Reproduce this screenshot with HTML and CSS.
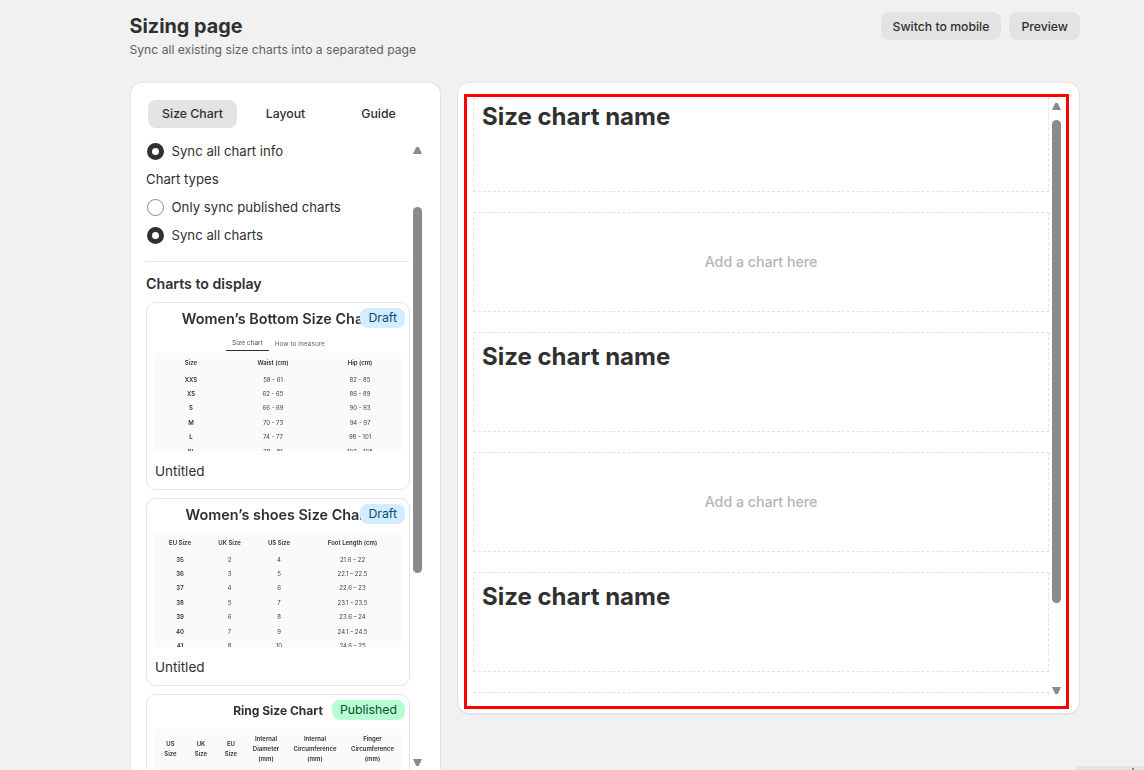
FILE: index.html
```html
<!DOCTYPE html>
<html lang="en">
<head>
<meta charset="utf-8">
<title>Sizing page</title>
<link rel="stylesheet" href="styles.css">
</head>
<body>
<main class="page">
  <header class="head">
    <div>
      <h1 class="title">Sizing page</h1>
      <p class="subtitle">Sync all existing size charts into a separated page</p>
    </div>
    <div class="actions">
      <button class="btn">Switch to mobile</button>
      <button class="btn">Preview</button>
    </div>
  </header>
  <div class="columns">
    <aside class="card side">
      <nav class="tabs">
        <span class="tab active">Size Chart</span>
        <span class="tab">Layout</span>
        <span class="tab">Guide</span>
      </nav>
      <div class="options">
        <label class="radio"><i class="dot on"></i>Sync all chart info</label>
        <div class="plain">Chart types</div>
        <label class="radio"><i class="dot"></i>Only sync published charts</label>
        <label class="radio"><i class="dot on"></i>Sync all charts</label>
      </div>
      <hr class="rule">
      <h2 class="section">Charts to display</h2>
      <div class="charts">
        <article class="chart">
          <span class="badge draft">Draft</span>
          <div class="chart-title">Women’s Bottom Size Chart</div>
          <div class="mini-tabs"><span class="mini-tab on">Size chart</span><span class="mini-tab">How to measure</span></div>
          <div class="sheet sheet-a">
            <b>Size</b><b>Waist (cm)</b><b>Hip (cm)</b>
            <b>XXS</b><span>58 - 61</span><span>82 - 85</span>
            <b>XS</b><span>62 - 65</span><span>86 - 89</span>
            <b>S</b><span>66 - 69</span><span>90 - 93</span>
            <b>M</b><span>70 - 73</span><span>94 - 97</span>
            <b>L</b><span>74 - 77</span><span>98 - 101</span>
            <b>XL</b><span>78 - 81</span><span>102 - 105</span>
          </div>
          <div class="chart-name">Untitled</div>
        </article>
        <article class="chart">
          <span class="badge draft">Draft</span>
          <div class="chart-title">Women’s shoes Size Chart</div>
          <div class="sheet sheet-b">
            <b>EU Size</b><b>UK Size</b><b>US Size</b><b>Foot Length (cm)</b>
            <b>35</b><span>2</span><span>4</span><span>21.6 – 22</span>
            <b>36</b><span>3</span><span>5</span><span>22.1 – 22.5</span>
            <b>37</b><span>4</span><span>6</span><span>22.6 – 23</span>
            <b>38</b><span>5</span><span>7</span><span>23.1 – 23.5</span>
            <b>39</b><span>6</span><span>8</span><span>23.6 – 24</span>
            <b>40</b><span>7</span><span>9</span><span>24.1 – 24.5</span>
            <b>41</b><span>8</span><span>10</span><span>24.6 – 25</span>
          </div>
          <div class="chart-name">Untitled</div>
        </article>
        <article class="chart">
          <span class="badge published">Published</span>
          <div class="chart-title small">Ring Size Chart</div>
          <div class="sheet sheet-c">
            <b>US<br>Size</b><b>UK<br>Size</b><b>EU<br>Size</b><b>Internal<br>Diameter<br>(mm)</b><b>Internal<br>Circumference<br>(mm)</b><b>Finger<br>Circumference<br>(mm)</b>
          </div>
        </article>
      </div>
      <div class="bar bar-left">
        <i class="arrow up"></i>
        <i class="thumb"></i>
        <i class="arrow down"></i>
      </div>
    </aside>
    <section class="card preview">
      <div class="frame">
        <div class="slots">
          <div class="slot"><h3 class="slot-name">Size chart name</h3></div>
          <div class="slot empty">Add a chart here</div>
          <div class="slot"><h3 class="slot-name">Size chart name</h3></div>
          <div class="slot empty">Add a chart here</div>
          <div class="slot"><h3 class="slot-name">Size chart name</h3></div>
          <div class="slot empty">Add a chart here</div>
        </div>
        <div class="bar bar-right">
          <i class="arrow up"></i>
          <i class="thumb"></i>
          <i class="arrow down"></i>
        </div>
      </div>
    </section>
  </div>
</main>
<div class="corner"></div>
</body>
</html>
```
FILE: styles.css
```css
* { box-sizing: border-box; }
html, body { height: 770px; overflow: hidden; }
body {
  margin: 0;
  background: #f1f1f1;
  color: #303030;
  font-family: Inter, "Liberation Sans", sans-serif;
}
.page { width: 950px; margin-left: 130px; padding-top: 12px; }
.head { display: flex; justify-content: space-between; align-items: flex-start; height: 70px; }
.title { margin: 0 0 0 -0.5px; font-size: 19.8px; line-height: 28px; font-weight: 650; }
.subtitle { margin: 0 0 0 -0.5px; font-size: 12.15px; line-height: 20px; color: #616161; }
.actions { display: flex; gap: 8px; }
.btn {
  height: 28px;
  padding: 0 12px;
  border: 0;
  border-radius: 8px;
  background: #e3e3e3;
  color: #303030;
  font: 550 12.25px Inter, sans-serif;
}
.columns { display: flex; gap: 16px; align-items: flex-start; }
.card {
  background: #fff;
  border: 1px solid #e3e3e3;
  border-radius: 12px;
  position: relative;
  box-shadow: 0 1px 0 rgba(0, 0, 0, .05);
}
.side { width: 311px; height: 688px; padding: 17px 15px 0; overflow: hidden; flex: none; border-bottom: 0; border-radius: 12px 12px 0 0; }
.tabs { display: flex; gap: 4px; margin-left: 2px; width: 275px; }
.tab {
  width: 89px; height: 28px;
  padding-bottom: 1px;
  display: flex; align-items: center; justify-content: center;
  border-radius: 8px;
  font-size: 12.3px; font-weight: 550;
}
.tab.active { background: #e3e3e3; }
.options { margin-top: 9px; }
.radio, .plain {
  height: 28px;
  display: flex; align-items: center;
  font-size: 13.2px;
}
.dot {
  width: 17px; height: 17px;
  margin: 0 8px 0 0.5px;
  border: 1px solid #8a8a8a;
  border-radius: 50%;
  background: #fff;
  flex: none;
}
.dot.on { border: 5px solid #303030; }
.rule { width: 264px; height: 1px; margin: 12px 0 0; border: 0; background: #e3e3e3; }
.section { margin: 12px 0 0; font-size: 14.2px; line-height: 20px; font-weight: 600; }
.charts { margin-top: 8px; width: 264px; display: flex; flex-direction: column; gap: 8px; }
.chart {
  position: relative;
  width: 264px; height: 188px; flex: none;
  padding: 6px 8px 0;
  border: 1px solid #e3e3e3;
  border-radius: 10px;
  overflow: hidden;
}
.badge {
  position: absolute; top: 5px; right: 4px;
  z-index: 1;
  height: 20px; padding: 0 8px;
  display: flex; align-items: center;
  border-radius: 8px;
  font-size: 12.3px;
  line-height: 20px;
}
.draft { background: #d5ebff; color: #00527c; }
.published { background: #b4fed2; color: #0c5132; }
.chart-title { width: 246px; height: 20px; line-height: 20px; font-size: 14.4px; font-weight: 600; text-align: center; white-space: nowrap; filter: blur(.2px); }
.chart-title.small { font-size: 12px; font-weight: 700; }
.mini-tabs { display: flex; margin: 8px 0 0 71px; height: 16px; font-size: 6.5px; color: #666; filter: blur(.2px); }
.mini-tab { padding: 2px 6px 0; line-height: 11px; }
.mini-tab.on { border-bottom: 1px solid #303030; padding-top: 1px; color: #555; height: 14px; }
.sheet {
  display: grid;
  width: 246px;
  background: #fafafa;
  font-size: 6px;
  color: #444;
  text-align: center;
  overflow: hidden;
  grid-template-rows: 19px;
  grid-auto-rows: 14.4px;
  align-items: center;
  filter: blur(.2px);
}
.sheet b { font-weight: 600; color: #303030; }
.sheet-a { height: 98px; grid-template-columns: 72px 92px 82px; }
.sheet-b { height: 114px; margin-top: 8px; grid-template-columns: 50px 49px 50px 97px; }
.sheet-c { height: 60px; margin-top: 8px; grid-template-columns: 31px 30px 30px 40px 58px 57px; grid-template-rows: 40px; line-height: 10px; }
.chart-name { margin-top: 10px; font-size: 13.5px; line-height: 20px; }
.bar { position: absolute; width: 9px; }
.bar-left { left: 282px; top: 60px; height: 627px; }
.bar-right { left: 585px; top: 5px; height: 592px; }
.thumb { position: absolute; left: 0; width: 9px; background: #8a8a8a; border-radius: 5px; }
.bar-left .thumb { top: 64px; height: 366px; }
.bar-right .thumb { top: 18px; height: 483px; }
.arrow { position: absolute; left: 0; width: 9px; height: 7px; background: #8a8a8a; }
.arrow.up { top: 4px; clip-path: polygon(36% 0, 64% 0, 100% 100%, 0 100%); }
.arrow.down { bottom: 4px; clip-path: polygon(0 0, 100% 0, 64% 100%, 36% 100%); }
.bar-right .arrow.up { top: 1px; }
.bar-right .arrow.down { bottom: 0; }
.preview { width: 623px; height: 632px; padding: 11px 10px 0 6px; flex: none; }
.frame {
  position: relative;
  width: 605px; height: 615px;
  border: 3px solid #ff0000;
  padding-left: 6px;
}
.slots { height: 600px; overflow: hidden; }
.slots::before { content: ""; display: block; margin-top: -5px; }
.slot {
  width: 576px; height: 100px;
  margin-bottom: 20px;
  padding: 8px;
  border: 1px dashed #e3e3e3;
}
.slot-name { margin: 0; font-size: 24px; line-height: 32px; font-weight: 700; }
.slot.empty { display: flex; align-items: center; justify-content: center; padding-bottom: 10px; font-size: 14.2px; font-weight: 500; color: #b5b5b5; }
.corner {
  position: fixed; right: 0; bottom: 0;
  width: 68px; height: 4px;
  background: #e3e3e3;
  border-radius: 6px 0 0 0;
}
.corner::after {
  content: "";
  position: absolute; left: 56px; top: 2px;
  width: 2px; height: 2px;
  background: #8a8a8a;
}
```
